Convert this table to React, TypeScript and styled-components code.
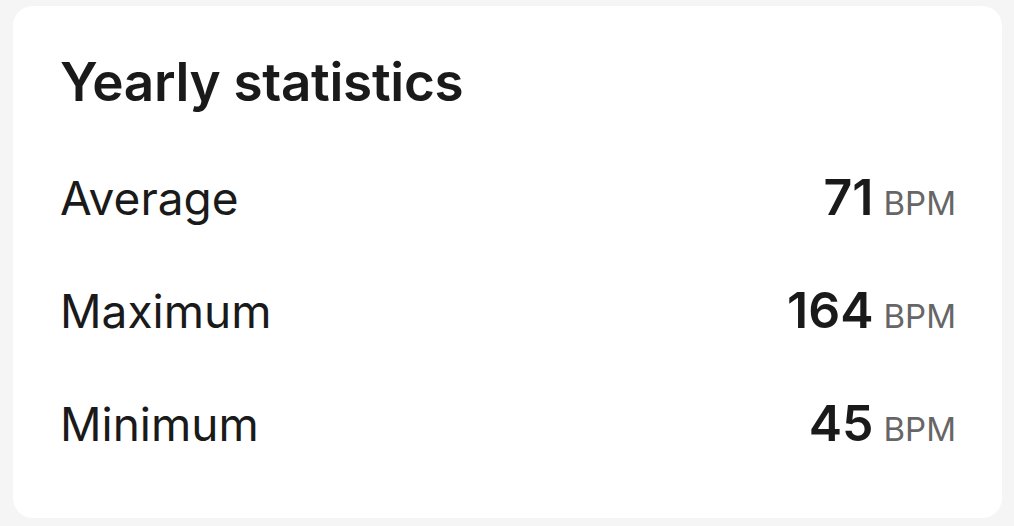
import React from "react";
import styled, { createGlobalStyle } from "styled-components";

const Global = createGlobalStyle`
  html, body { margin: 0; padding: 0; background: #f5f5f5; }
  body { font-family: "Inter", "Noto Sans", sans-serif; font-variant-ligatures: none; }
`;

const Page = styled.div`
  width: 1014px;
  height: 526px;
  box-sizing: border-box;
  padding: 6px 12px 8px 13px;
  display: flex;
`;

const Card = styled.section`
  flex: 1;
  background: #ffffff;
  border-radius: 20px;
  padding: 44px 46px 0 47px;
  display: flex;
  flex-direction: column;
`;

const Title = styled.h2`
  margin: 0 0 27px;
  font-size: 53px;
  line-height: 64px;
  font-weight: 600;
  letter-spacing: -0.3px;
  color: #1a1a1a;
`;

const Row = styled.div`
  display: flex;
  align-items: baseline;
  justify-content: space-between;
  height: 113px;
  line-height: 113px;
`;

const Label = styled.span`
  font-size: 46px;
  color: #1a1a1a;
`;

const Value = styled.span`
  display: flex;
  align-items: baseline;
  gap: 10px;
`;

const Num = styled.span`
  font-size: 50px;
  font-weight: 600;
  color: #1a1a1a;
`;

const Unit = styled.span`
  font-size: 33px;
  color: #666666;
`;

const stats = [
  { label: "Average", value: "71" },
  { label: "Maximum", value: "164" },
  { label: "Minimum", value: "45" },
];

export default function App() {
  return (
    <>
      <Global />
      <Page>
        <Card>
          <Title>Yearly statistics</Title>
          {stats.map((s) => (
            <Row key={s.label}>
              <Label>{s.label}</Label>
              <Value>
                <Num>{s.value}</Num>
                <Unit>BPM</Unit>
              </Value>
            </Row>
          ))}
        </Card>
      </Page>
    </>
  );
}
